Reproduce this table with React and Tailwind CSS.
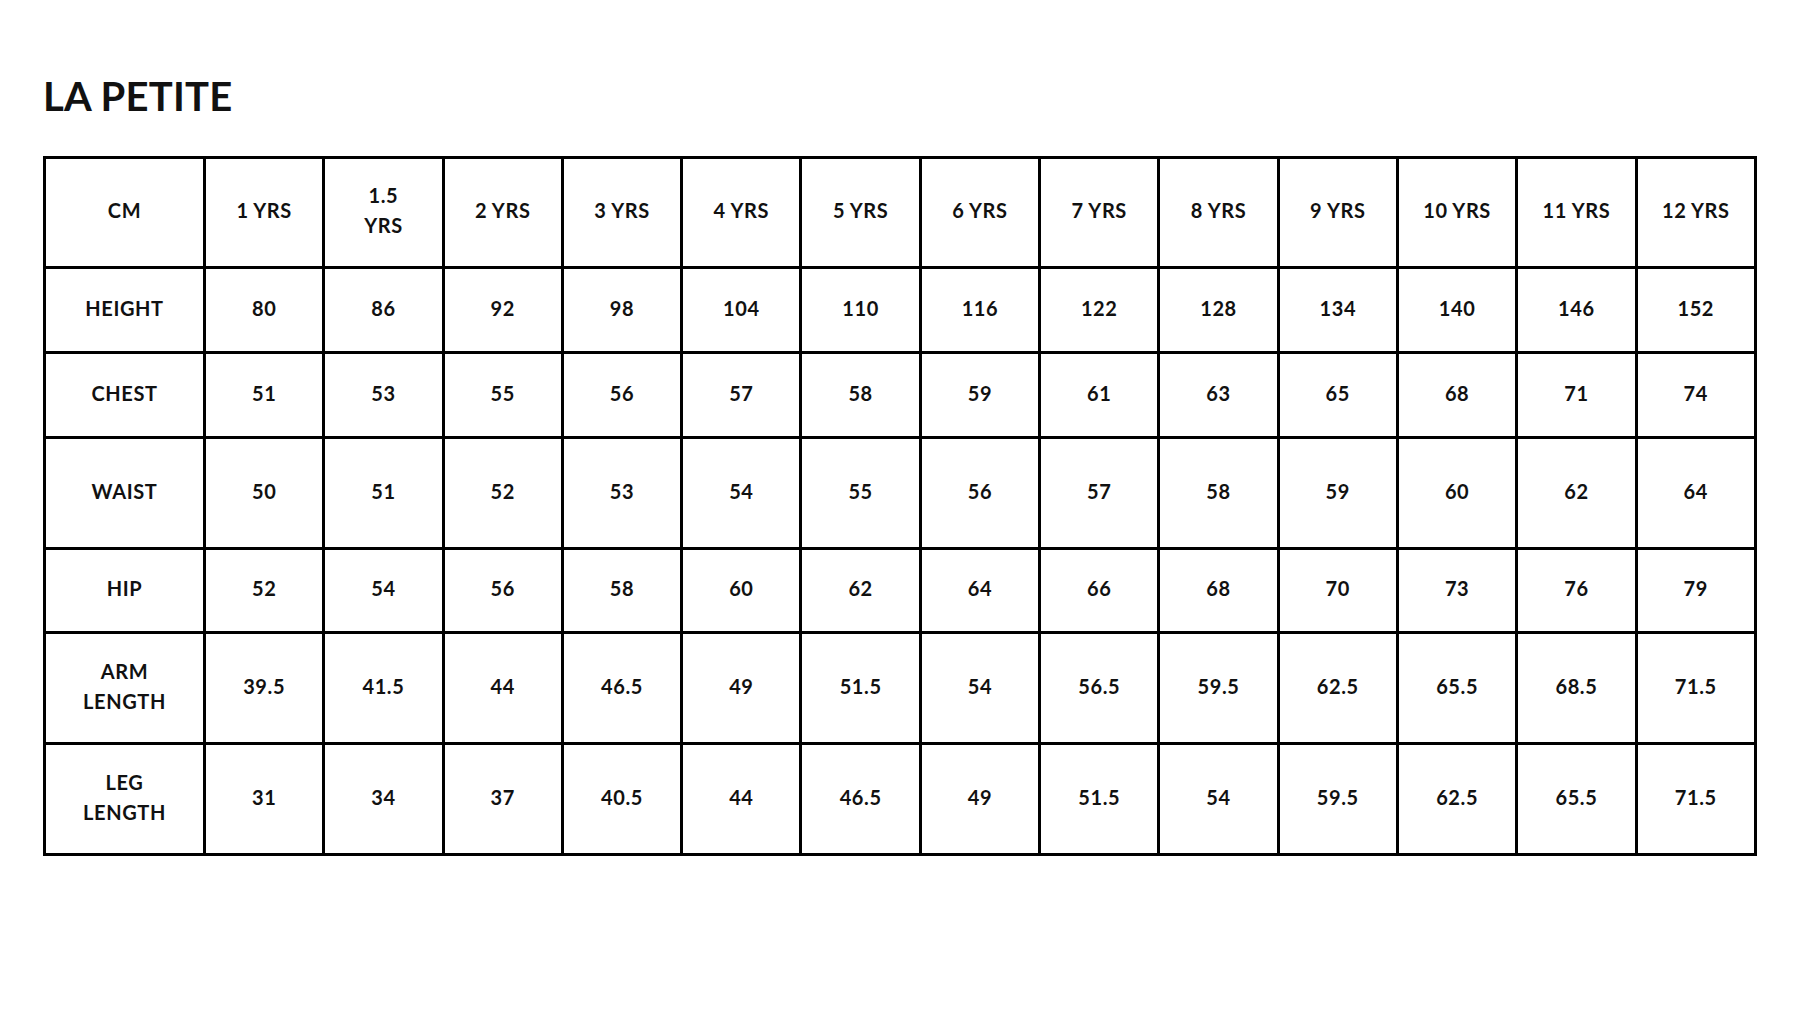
const years = ['1 YRS', '1.5\nYRS', '2 YRS', '3 YRS', '4 YRS', '5 YRS', '6 YRS', '7 YRS', '8 YRS', '9 YRS', '10 YRS', '11 YRS', '12 YRS'];

const rows = [
  { label: 'HEIGHT', h: 'h-[85px]', values: ['80', '86', '92', '98', '104', '110', '116', '122', '128', '134', '140', '146', '152'] },
  { label: 'CHEST', h: 'h-[85px]', values: ['51', '53', '55', '56', '57', '58', '59', '61', '63', '65', '68', '71', '74'] },
  { label: 'WAIST', h: 'h-[111px]', values: ['50', '51', '52', '53', '54', '55', '56', '57', '58', '59', '60', '62', '64'] },
  { label: 'HIP', h: 'h-[84px]', values: ['52', '54', '56', '58', '60', '62', '64', '66', '68', '70', '73', '76', '79'] },
  { label: 'ARM\nLENGTH', h: 'h-[111px]', values: ['39.5', '41.5', '44', '46.5', '49', '51.5', '54', '56.5', '59.5', '62.5', '65.5', '68.5', '71.5'] },
  { label: 'LEG\nLENGTH', h: 'h-[111px]', values: ['31', '34', '37', '40.5', '44', '46.5', '49', '51.5', '54', '59.5', '62.5', '65.5', '71.5'] },
];

function Cell({ children }) {
  return (
    <td className="border-[3px] border-black p-0 pb-[5px] text-center align-middle whitespace-pre-line">
      {children}
    </td>
  );
}

export default function App() {
  return (
    <div className="min-h-[1013px] w-[1800px] bg-white pl-[43px] pt-[74px] text-[#111] font-['Lato','Noto_Sans',sans-serif]">
      <h1 className="text-[40px] font-bold leading-[44px] tracking-[0.2px]">LA PETITE</h1>

      <table className="mt-[38px] w-[1714px] table-fixed border-collapse text-[20px] font-bold leading-[30px] tracking-[0.6px]">
        <colgroup>
          <col className="w-[160px]" />
          {years.map((y) => (
            <col key={y} />
          ))}
        </colgroup>
        <thead>
          <tr className="h-[110px]">
            <Cell>CM</Cell>
            {years.map((y) => (
              <Cell key={y}>{y}</Cell>
            ))}
          </tr>
        </thead>
        <tbody>
          {rows.map((r) => (
            <tr key={r.label} className={r.h}>
              <Cell>{r.label}</Cell>
              {r.values.map((v, i) => (
                <Cell key={i}>{v}</Cell>
              ))}
            </tr>
          ))}
        </tbody>
      </table>
    </div>
  );
}
